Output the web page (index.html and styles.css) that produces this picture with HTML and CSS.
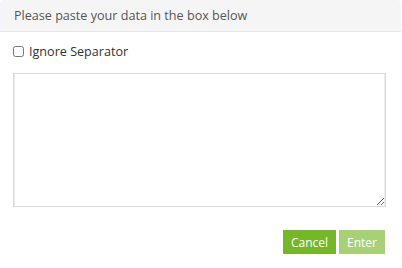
FILE: index.html
```html
<!DOCTYPE html>
<html>
<head>
<meta charset="utf-8">
<link rel="stylesheet" href="styles.css">
</head>
<body>
<div class="dialog">
  <div class="header">Please paste your data in the box below</div>
  <div class="body">
    <label class="check"><input type="checkbox" class="cb"><span>Ignore Separator</span></label>
    <textarea class="data"></textarea>
  </div>
  <div class="footer">
    <button class="btn cancel">Cancel</button>
    <button class="btn enter">Enter</button>
  </div>
</div>
</body>
</html>
```
FILE: styles.css
```css
html, body {
  margin: 0;
  padding: 0;
  background: #fff;
}
.dialog {
  width: 401px;
  font-family: "Open Sans", "Liberation Sans", sans-serif;
  color: #333;
}
.header {
  height: 31px;
  line-height: 31px;
  background: #f5f5f5;
  border-bottom: 1px solid #e6e6e6;
  border-radius: 4px 4px 0 0;
  padding-left: 14px;
  font-size: 12.6px;
  color: #555;
}
.body {
  padding: 10px 15px 0 13px;
  display: flex;
  flex-direction: column;
}
.check {
  display: flex;
  align-items: center;
  height: 18px;
  font-size: 12.6px;
  color: #333;
}
.cb {
  margin: 0 5px 0 0;
  width: 11px;
  height: 11px;
}
.data {
  margin-top: 13px;
  width: 373px;
  height: 134px;
  box-sizing: border-box;
  border: 1px solid #d9d9d9;
  box-shadow: inset 1px 0 0 #ececec, inset -1px 0 0 #ececec;
  resize: both;
  padding: 4px;
  font-family: "Open Sans", sans-serif;
  font-size: 13px;
}
.footer {
  display: flex;
  justify-content: flex-end;
  gap: 3px;
  padding: 23px 16px 0 0;
}
.btn {
  height: 24px;
  border: none;
  border-radius: 0;
  color: #fff;
  font-family: "Open Sans", "Liberation Sans", sans-serif;
  font-size: 12px;
  padding: 0 8px;
  margin: 0;
}
.cancel {
  width: 53px;
  background: #76b72a;
}
.enter {
  width: 46px;
  background: #a8d177;
}
```
